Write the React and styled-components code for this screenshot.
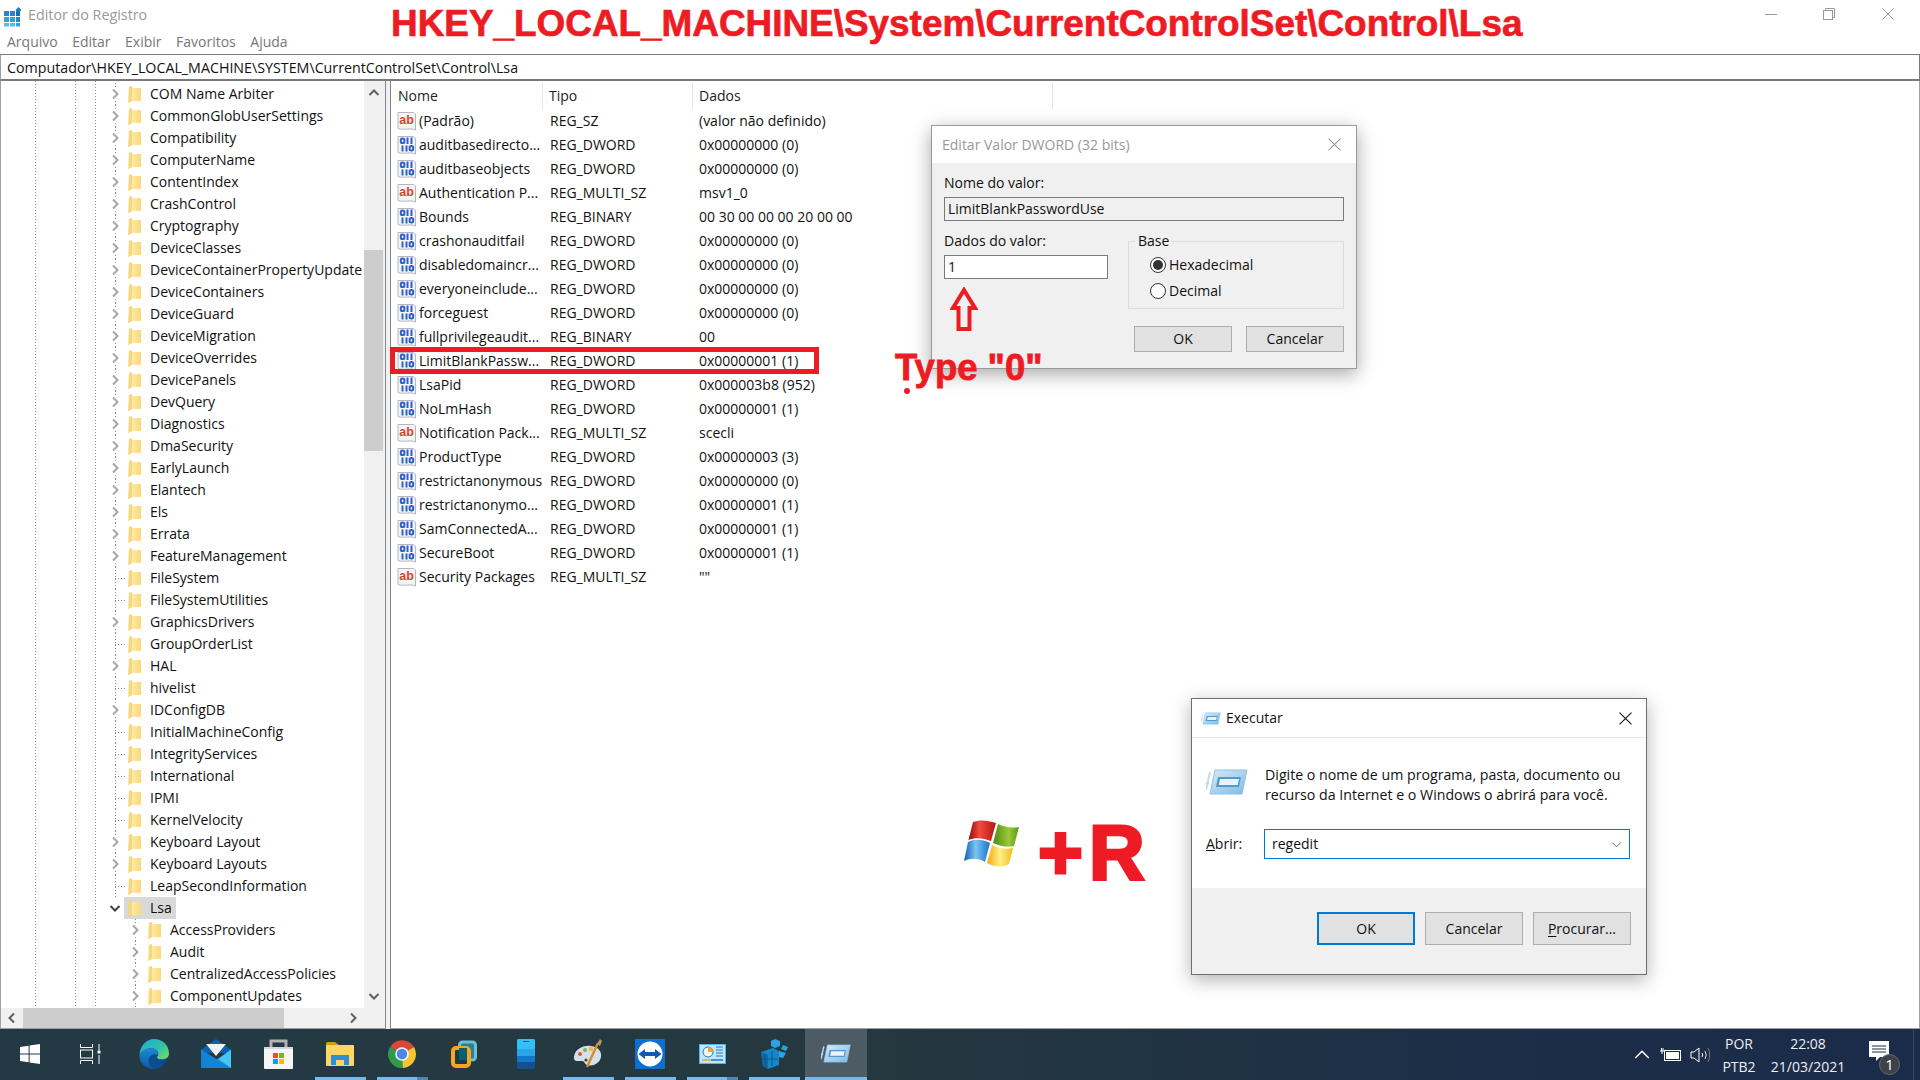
import React from 'react';
import styled, { createGlobalStyle } from 'styled-components';

const UI_FONT = '"Open Sans", "Noto Sans", "Liberation Sans", sans-serif';
const RED = '#ed1c24';

const GlobalStyle = createGlobalStyle`
  html, body { margin: 0; padding: 0; background: #fff; }
  * { box-sizing: border-box; }
  body { font: 14px/18px ${UI_FONT}; color: #111; overflow: hidden; }
`;

const treeItems = [
  ['COM Name Arbiter', 1], ['CommonGlobUserSettings', 1], ['Compatibility', 1], ['ComputerName', 1],
  ['ContentIndex', 1], ['CrashControl', 1], ['Cryptography', 1], ['DeviceClasses', 1],
  ['DeviceContainerPropertyUpdate', 1], ['DeviceContainers', 1], ['DeviceGuard', 1], ['DeviceMigration', 1],
  ['DeviceOverrides', 1], ['DevicePanels', 1], ['DevQuery', 1], ['Diagnostics', 1], ['DmaSecurity', 1],
  ['EarlyLaunch', 1], ['Elantech', 1], ['Els', 1], ['Errata', 1], ['FeatureManagement', 1],
  ['FileSystem', 0], ['FileSystemUtilities', 0], ['GraphicsDrivers', 1], ['GroupOrderList', 0], ['HAL', 1],
  ['hivelist', 0], ['IDConfigDB', 1], ['InitialMachineConfig', 0], ['IntegrityServices', 0],
  ['International', 0], ['IPMI', 0], ['KernelVelocity', 0], ['Keyboard Layout', 1], ['Keyboard Layouts', 1],
  ['LeapSecondInformation', 0],
];
const lsaChildren = ['AccessProviders', 'Audit', 'CentralizedAccessPolicies', 'ComponentUpdates'];

const values = [
  ['ab', '(Padrão)', 'REG_SZ', '(valor não definido)'],
  ['bin', 'auditbasedirecto...', 'REG_DWORD', '0x00000000 (0)'],
  ['bin', 'auditbaseobjects', 'REG_DWORD', '0x00000000 (0)'],
  ['ab', 'Authentication P...', 'REG_MULTI_SZ', 'msv1_0'],
  ['bin', 'Bounds', 'REG_BINARY', '00 30 00 00 00 20 00 00'],
  ['bin', 'crashonauditfail', 'REG_DWORD', '0x00000000 (0)'],
  ['bin', 'disabledomaincr...', 'REG_DWORD', '0x00000000 (0)'],
  ['bin', 'everyoneinclude...', 'REG_DWORD', '0x00000000 (0)'],
  ['bin', 'forceguest', 'REG_DWORD', '0x00000000 (0)'],
  ['bin', 'fullprivilegeaudit...', 'REG_BINARY', '00'],
  ['bin', 'LimitBlankPassw...', 'REG_DWORD', '0x00000001 (1)'],
  ['bin', 'LsaPid', 'REG_DWORD', '0x000003b8 (952)'],
  ['bin', 'NoLmHash', 'REG_DWORD', '0x00000001 (1)'],
  ['ab', 'Notification Pack...', 'REG_MULTI_SZ', 'scecli'],
  ['bin', 'ProductType', 'REG_DWORD', '0x00000003 (3)'],
  ['bin', 'restrictanonymous', 'REG_DWORD', '0x00000000 (0)'],
  ['bin', 'restrictanonymo...', 'REG_DWORD', '0x00000001 (1)'],
  ['bin', 'SamConnectedA...', 'REG_DWORD', '0x00000001 (1)'],
  ['bin', 'SecureBoot', 'REG_DWORD', '0x00000001 (1)'],
  ['ab', 'Security Packages', 'REG_MULTI_SZ', '""'],
];

/* ---------- page ---------- */

const Page = styled.div`
  position: relative;
  width: 1920px;
  height: 1080px;
  display: flex;
  flex-direction: column;
  overflow: hidden;
  background: #fff;
`;

const TitleBar = styled.div`
  height: 30px;
  display: flex;
  align-items: center;
  padding: 0 3px 0 2px;
  color: #999;
  font-size: 14.3px;
  svg { flex: none; }
`;

const TitleText = styled.span`
  margin-left: 6px;
`;

const WindowControls = styled.div`
  margin-left: auto;
  display: flex;
`;

const ControlButton = styled.div`
  width: 58.5px;
  height: 30px;
  display: flex;
  align-items: center;
  justify-content: center;
  padding-bottom: 2px;
`;

const MenuBar = styled.div`
  height: 24px;
  display: flex;
  align-items: center;
  padding-left: 7px;
  gap: 14.5px;
  color: #777;
  font-size: 14px;
`;

const AddressBar = styled.div`
  height: 27px;
  border: 1px solid #7a7a7a;
  border-bottom-width: 2px;
  border-left: 1px solid #a0a0a0;
  padding: 1px 0 0 6px;
  display: flex;
  align-items: center;
  font-size: 14.25px;
  white-space: nowrap;
`;

const Body = styled.div`
  flex: 1;
  min-height: 0;
  display: flex;
`;

/* ---------- tree ---------- */

const TreePane = styled.div`
  width: 386px;
  flex: none;
  display: grid;
  grid-template-columns: 1fr 21px;
  grid-template-rows: 1fr 20px;
  border-left: 1px solid #a0a0a0;
  border-right: 1px solid #828790;
  border-bottom: 1px solid #a0a0a0;
`;

const dots = (x) => `repeating-linear-gradient(#8a8a8a 0 1px, transparent 1px 3px) ${x}px 0 / 1px 100% no-repeat`;

const TreeView = styled.div`
  overflow: hidden;
  padding-top: 2px;
  background: ${dots(34)}, ${dots(74)}, ${dots(94)};
`;

const TreeRow = styled.div`
  height: 22px;
  display: flex;
  align-items: center;
  padding-left: ${(p) => (p.$depth ? 124 : 104)}px;
  white-space: nowrap;
  background: ${(p) => (p.$last ? 'none' : dots(p.$depth ? 134 : 114))};
`;

const Twisty = styled.span`
  width: 20px;
  height: 22px;
  flex: none;
  display: flex;
  align-items: center;
  justify-content: center;
  svg { background: #fff; }
`;

const LeafDash = styled.span`
  width: 10px;
  height: 1px;
  margin-left: 10px;
  flex: none;
  background: repeating-linear-gradient(90deg, #8a8a8a 0 1px, transparent 1px 3px);
`;

const TreeEntry = styled.span`
  display: flex;
  align-items: center;
  height: 22px;
  padding: 0 4px;
  margin-left: -1px;
  background: ${(p) => (p.$selected ? '#d9d9d9' : 'transparent')};
  svg { margin-right: 9px; flex: none; }
`;

const VScroll = styled.div`
  background: #f0f0f0;
  display: flex;
  flex-direction: column;
  align-items: center;
  width: 21px;
  padding-right: 2px;
`;

const ScrollArrow = styled.div`
  flex: none;
  width: 100%;
  height: ${(p) => p.$size || 24}px;
  display: flex;
  align-items: center;
  justify-content: center;
  margin-top: ${(p) => (p.$end ? 'auto' : 0)};
`;

const VThumb = styled.div`
  width: 100%;
  height: 201px;
  margin-top: 145px;
  background: #cdcdcd;
`;

const HScroll = styled.div`
  background: #f0f0f0;
  display: flex;
  align-items: stretch;
  grid-column: 1;
`;

const HThumb = styled.div`
  width: 261px;
  background: #cdcdcd;
`;

const HArrow = styled.div`
  width: 22px;
  flex: none;
  display: flex;
  align-items: center;
  justify-content: center;
  margin-left: ${(p) => (p.$end ? 'auto' : 0)};
`;

const Corner = styled.div`
  background: #f0f0f0;
`;

const Splitter = styled.div`
  width: 4px;
  flex: none;
  background: #f0f0f0;
`;

/* ---------- value list ---------- */

const ListPane = styled.div`
  flex: 1;
  border-left: 1px solid #828790;
  border-bottom: 1px solid #a0a0a0;
  border-right: 1px solid #a0a0a0;
`;

const ListHeader = styled.div`
  display: grid;
  grid-template-columns: 152px 150px 360px;
  height: 28px;
  padding-top: 2px;
  align-items: center;
`;

const HeaderCell = styled.div`
  height: 26px;
  padding-left: ${(p) => p.$pad}px;
  display: flex;
  align-items: center;
  color: #222;
  border-right: 1px solid #e5e5e5;
`;

const ListRow = styled.div`
  display: grid;
  grid-template-columns: 153px 149px 1fr;
  height: 24px;
  align-items: center;
  padding-left: 6px;
  white-space: nowrap;
`;

const NameCell = styled.div`
  display: flex;
  align-items: center;
  gap: 2px;
  overflow: hidden;
`;

/* ---------- dialogs ---------- */

const DwordWindow = styled.div`
  position: absolute;
  left: 931px;
  top: 125px;
  width: 426px;
  height: 244px;
  border: 1px solid #9a9a9a;
  background: #f0f0f0;
  box-shadow: 0 5px 18px rgba(0, 0, 0, 0.35);
`;

const DialogTitle = styled.div`
  height: 37px;
  background: #fff;
  display: flex;
  align-items: center;
  justify-content: space-between;
  padding: 0 15px 0 10px;
  color: ${(p) => (p.$active ? '#111' : '#999')};
`;

const DwordBody = styled.div`
  padding: 11px 12px 0 12px;
`;

const FieldLabel = styled.div`
  height: 18px;
  margin-bottom: 5px;
  line-height: 18px;
`;

const TextField = styled.div`
  height: 24px;
  border: 1px solid #7a7a7a;
  background: ${(p) => (p.$readOnly ? '#f0f0f0' : '#fff')};
  display: flex;
  align-items: center;
  padding-left: 3px;
`;

const DwordColumns = styled.div`
  display: grid;
  grid-template-columns: 164px 216px;
  column-gap: 20px;
  margin-top: 11px;
`;

const BaseGroup = styled.fieldset`
  margin: 0;
  height: 77px;
  padding: 2px 0 0 21px;
  border: 1px solid #dcdcdc;
  legend {
    margin-left: -15px;
    padding: 0 3px;
    line-height: 18px;
  }
`;

const RadioRow = styled.div`
  height: 26px;
  display: flex;
  align-items: center;
  gap: 3px;
`;

const RadioDot = styled.span`
  width: 16px;
  height: 16px;
  border-radius: 50%;
  border: 1px solid #333;
  background: #fff;
  display: flex;
  align-items: center;
  justify-content: center;
  &::after {
    content: '';
    width: 10px;
    height: 10px;
    border-radius: 50%;
    background: ${(p) => (p.$on ? '#333' : 'transparent')};
  }
`;

const ButtonRow = styled.div`
  display: flex;
  justify-content: flex-end;
  gap: ${(p) => p.$gap}px;
  margin-top: ${(p) => p.$top || 0}px;
  padding-right: ${(p) => p.$right || 0}px;
`;

const DialogButton = styled.div`
  width: 98px;
  height: ${(p) => p.$h}px;
  background: #e1e1e1;
  border: ${(p) => (p.$focus ? '2px solid #0078d7' : '1px solid #adadad')};
  display: flex;
  align-items: center;
  justify-content: center;
  u { text-decoration-thickness: 1px; text-underline-offset: 2px; }
`;

const RunWindow = styled.div`
  position: absolute;
  left: 1191px;
  top: 698px;
  width: 456px;
  height: 277px;
  border: 1px solid #6f6f6f;
  background: #fff;
  display: flex;
  flex-direction: column;
  box-shadow: 0 5px 18px rgba(0, 0, 0, 0.3);
`;

const RunTitle = styled.div`
  height: 39px;
  flex: none;
  border-bottom: 1px solid #e8e8e8;
  display: flex;
  align-items: center;
  padding: 0 14px 0 9px;
  gap: 5px;
  svg:last-child { margin-left: auto; }
`;

const RunBody = styled.div`
  flex: none;
  height: 150px;
  padding: 27px 16px 0 14px;
`;

const RunMessage = styled.div`
  display: flex;
  gap: 17px;
  font-size: 14.2px;
  line-height: 20px;
  white-space: nowrap;
  svg { flex: none; margin-top: 4px; }
`;

const RunForm = styled.div`
  display: flex;
  align-items: center;
  justify-content: space-between;
  margin-top: 24px;
`;

const ComboBox = styled.div`
  width: 366px;
  height: 30px;
  border: 1px solid #0078d7;
  display: flex;
  align-items: center;
  justify-content: space-between;
  padding: 0 7px 0 7px;
`;

const RunFooter = styled.div`
  flex: 1;
  background: #f0f0f0;
  padding-top: 24px;
`;

/* ---------- annotations ---------- */

const BigTitle = styled.div`
  position: absolute;
  left: 391px;
  top: 2px;
  font: 700 36.9px/44px "Liberation Sans", Arial, sans-serif;
  -webkit-text-stroke: 0.7px ${RED};
  color: ${RED};
  white-space: nowrap;
`;

const RedFrame = styled.div`
  position: absolute;
  left: 390px;
  top: 347px;
  width: 429px;
  height: 27px;
  border: 5px solid ${RED};
`;

const TypeNote = styled.div`
  position: absolute;
  left: 895px;
  top: 346px;
  font: 700 36.5px/44px "Liberation Sans", Arial, sans-serif;
  -webkit-text-stroke: 0.8px ${RED};
  color: ${RED};
  white-space: nowrap;
`;

const RedDot = styled.div`
  position: absolute;
  left: 904px;
  top: 388px;
  width: 6px;
  height: 6px;
  border-radius: 50%;
  background: ${RED};
`;

const ArrowNote = styled.svg`
  position: absolute;
  left: 950px;
  top: 287px;
`;

const LogoNote = styled.svg`
  position: absolute;
  left: 964px;
  top: 820px;
`;

const PlusR = styled.div`
  position: absolute;
  left: 1038px;
  top: 808px;
  font: 700 77px/88px "Liberation Sans", Arial, sans-serif;
  -webkit-text-stroke: 3px ${RED};
  letter-spacing: 6px;
  color: ${RED};
  white-space: nowrap;
`;

/* ---------- taskbar ---------- */

const Taskbar = styled.div`
  height: 51px;
  flex: none;
  display: flex;
  align-items: stretch;
  color: #eee;
  background: linear-gradient(90deg, #233a45 0%, #25383f 45%, #1b2d49 82%, #1b2c4a 100%);
`;

const TaskButton = styled.div`
  position: relative;
  width: ${(p) => p.$w || 62}px;
  margin-right: ${(p) => p.$mr || 0}px;
  flex: none;
  display: flex;
  align-items: center;
  justify-content: center;
  padding-bottom: 2px;
  background: ${(p) => (p.$active ? '#4d5c64' : 'transparent')};
`;

const RunningTick = styled.span`
  position: absolute;
  bottom: 0;
  left: ${(p) => (p.$full ? 0 : 6)}px;
  right: ${(p) => (p.$full ? 0 : 5)}px;
  height: 3px;
  background: ${(p) =>
    p.$stacked ? 'linear-gradient(90deg, #76b9ed 0 40px, #4f86b0 40px)' : '#76b9ed'};
`;

const Tray = styled.div`
  margin-left: auto;
  display: flex;
  align-items: center;
  font-size: 14px;
`;

const TrayIcon = styled.div`
  width: ${(p) => p.$w}px;
  display: flex;
  align-items: center;
  justify-content: center;
`;

const TrayStack = styled.div`
  width: ${(p) => p.$w}px;
  display: flex;
  flex-direction: column;
  align-items: center;
  line-height: 23px;
  white-space: nowrap;
`;

const NotifyButton = styled.div`
  position: relative;
  width: 62px;
  height: 100%;
  display: flex;
  align-items: center;
  padding: 0 0 8px 17px;
  border-right: 1px solid #3c4a5e;
`;

const NotifyBadge = styled.span`
  position: absolute;
  left: 27px;
  top: 25px;
  width: 21px;
  height: 21px;
  border-radius: 50%;
  background: #3d4249;
  border: 1px solid #666b72;
  color: #fff;
  font-size: 15px;
  line-height: 19px;
  text-align: center;
`;

const DesktopPeek = styled.div`
  width: 6px;
`;

/* ---------- small drawings ---------- */

const Chevron = ({ dir = 'right', color = '#a6a6a6', size = 12, w = 2 }) => {
  const pts = {
    right: '4,1.5 8.5,6 4,10.5',
    left: '8,1.5 3.5,6 8,10.5',
    up: '1.5,8 6,3.5 10.5,8',
    down: '1.5,4 6,8.5 10.5,4',
  }[dir];
  return (
    <svg width={size} height={size} viewBox="0 0 12 12">
      <polyline points={pts} fill="none" stroke={color} strokeWidth={w} />
    </svg>
  );
};

const Cross = ({ size = 12, color = '#999' }) => (
  <svg width={size} height={size} viewBox="0 0 12 12">
    <path d="M0.5 0.5 L11.5 11.5 M11.5 0.5 L0.5 11.5" stroke={color} strokeWidth="1" fill="none" />
  </svg>
);

const FolderIcon = () => (
  <svg width="13" height="17" viewBox="0 0 13 17">
    <defs>
      <linearGradient id="fold" x1="0" x2="1" y1="0" y2="0">
        <stop offset="0" stopColor="#f3c75d" />
        <stop offset="0.3" stopColor="#ffeaa6" />
        <stop offset="1" stopColor="#fcd877" />
      </linearGradient>
    </defs>
    <path d="M1 1 L4 0 V2 H13 V15 H4 L0.5 17 Z" fill="url(#fold)" />
    <path d="M1 1 L4 0 V15 L0.5 17 Z" fill="#f8d67c" />
  </svg>
);

const Sheet = ({ children }) => (
  <svg width="20" height="20" viewBox="0 0 20 20" style={{ flex: 'none' }}>
    <path d="M1 1.5 H16.5 L18.5 3 V19 C13 16.5 7 19.5 1 17.5 Z" fill="#f6f6f6" stroke="#b4b6c0" />
    {children}
  </svg>
);

const AbIcon = () => (
  <Sheet>
    <text x="2.2" y="12.5" fontFamily="Liberation Sans, sans-serif" fontWeight="700" fontSize="12.5" fill="#d8452c">
      ab
    </text>
  </Sheet>
);

const BinIcon = () => (
  <Sheet>
    <g fill="none" stroke="#2a5fd0" strokeWidth="2">
      <rect x="3.8" y="3.5" width="3.6" height="4.6" rx="1.6" />
      <path d="M10.5 2.5 V9 M14.5 2.5 V9" />
      <path d="M5.5 10.5 V16.5 M9.5 10.5 V16.5" />
      <rect x="12.6" y="11" width="3.6" height="4.4" rx="1.6" />
    </g>
  </Sheet>
);

const RegeditSmall = () => (
  <svg width="20" height="24" viewBox="0 0 20 24">
    <g fill="#1c8ad0">
      <rect x="2" y="8" width="5" height="5" />
      <rect x="8" y="8" width="5" height="5" />
      <rect x="14" y="8" width="4" height="5" fill="#136fb5" />
      <rect x="2" y="14" width="5" height="5" fill="#2ea3e0" />
      <rect x="8" y="14" width="5" height="5" fill="#2ea3e0" />
      <rect x="14" y="14" width="4" height="5" />
      <rect x="2" y="20" width="5" height="3.5" fill="#54bdeb" />
      <rect x="8" y="20" width="5" height="3.5" fill="#54bdeb" />
      <rect x="14" y="20" width="4" height="3.5" fill="#2ea3e0" />
      <path d="M16.5 4 L19.5 7 L16.5 10 L13.5 7 Z" fill="#1c7fc4" />
    </g>
  </svg>
);

const RunGlyph = ({ w = 42, h = 26 }) => (
  <svg width={w} height={h} viewBox="0 0 42 26">
    <defs>
      <linearGradient id="runG" x1="0" x2="1" y1="0" y2="1">
        <stop offset="0" stopColor="#d6ecfa" />
        <stop offset="1" stopColor="#7fb9e3" />
      </linearGradient>
    </defs>
    <path d="M0 21 L4 3 M-0 14 L3 14" stroke="#bcdcf2" strokeWidth="2" fill="none" />
    <path d="M9 1 H41 L36 25 H4 Z" fill="url(#runG)" stroke="#8fc1e6" />
    <path d="M12 8 H35 L33 18 H10 Z" fill="#4e9ad2" />
    <path d="M14 10 H33 L31.8 16 H12.8 Z" fill="#e8f3fb" />
  </svg>
);

const WinXpLogo = () => (
  <LogoNote width="55" height="48" viewBox="0 0 55 48">
    <defs>
      <linearGradient id="xpR" x1="0" x2="1" y1="0" y2="0">
        <stop offset="0" stopColor="#8d0d0d" />
        <stop offset="0.4" stopColor="#f04b3b" />
        <stop offset="1" stopColor="#b81414" />
      </linearGradient>
      <linearGradient id="xpG" x1="0" x2="1" y1="0" y2="0">
        <stop offset="0" stopColor="#4f8a12" />
        <stop offset="0.6" stopColor="#9ac93a" />
        <stop offset="1" stopColor="#5c9a16" />
      </linearGradient>
      <linearGradient id="xpB" x1="0" x2="1" y1="0" y2="0">
        <stop offset="0" stopColor="#0f5fb5" />
        <stop offset="0.45" stopColor="#7cc4f2" />
        <stop offset="1" stopColor="#1a73c8" />
      </linearGradient>
      <linearGradient id="xpY" x1="0" x2="1" y1="0" y2="0">
        <stop offset="0" stopColor="#f2a90c" />
        <stop offset="0.5" stopColor="#fff08a" />
        <stop offset="1" stopColor="#f5b818" />
      </linearGradient>
    </defs>
    <path d="M9 2 C15 -0.5 23 0 32 3 L27 21 C20 18 11 17 4.5 20 Z" fill="url(#xpR)" />
    <path d="M34 4 C40 7 48 8.5 55 7 L50 26 C44 28 36 26 29 23 Z" fill="url(#xpG)" />
    <path d="M4 22 C10 19 18 19 26 23 L21 42 C14 38 7 38 0 41 Z" fill="url(#xpB)" />
    <path d="M28 25 C34 28 42 30 49 28 L45 44 C38 48 30 47 23 43 Z" fill="url(#xpY)" />
  </LogoNote>
);

/* taskbar glyphs */
const StartIcon = () => (
  <svg width="20" height="20" viewBox="0 0 20 20">
    <path d="M0 3 L8.6 1.7 V9.4 H0 Z M9.6 1.5 L20 0 V9.4 H9.6 Z M0 10.4 H8.6 V18.2 L0 17 Z M9.6 10.4 H20 V20 L9.6 18.4 Z" fill="#fff" />
  </svg>
);

const TaskViewIcon = () => (
  <svg width="21" height="20" viewBox="0 0 21 20">
    <path d="M0.5 0 V3.5 H12.5 V0 M0.5 20 V16.5 H12.5 V20" fill="none" stroke="#fff" />
    <rect x="0.5" y="6" width="12" height="8" fill="none" stroke="#fff" />
    <path d="M19 0 V6 M19 11 V20" stroke="#fff" />
    <rect x="17.5" y="6.5" width="3" height="3" fill="#fff" />
  </svg>
);

const EdgeIcon = () => (
  <svg width="30" height="30" viewBox="0 0 30 30">
    <defs>
      <linearGradient id="edgeA" x1="0" x2="1" y1="0" y2="1">
        <stop offset="0" stopColor="#1fa7dc" />
        <stop offset="0.55" stopColor="#2fc2a7" />
        <stop offset="1" stopColor="#7fdc5a" />
      </linearGradient>
      <linearGradient id="edgeB" x1="0" x2="0" y1="0" y2="1">
        <stop offset="0" stopColor="#1c8ad6" />
        <stop offset="1" stopColor="#0c59a4" />
      </linearGradient>
    </defs>
    <path d="M15 0 C24 0 30 6.5 30 14.5 C30 19 26 20.5 22 20.5 C18 20.5 17 19 18 18 C20 16 20 12 16 10 C10 7.5 3 11 0.5 16 C1 7 7 0 15 0 Z" fill="url(#edgeA)" />
    <path d="M0.5 16 C3 11 10 7.5 16 10 C19 11.5 19.5 14 18.5 16 C13 14 9.5 18 10 22 C10.5 26 13 29 17 30 C8 31 0 25 0.5 16 Z" fill="url(#edgeB)" />
    <path d="M10 22 C9.5 18 13 14 18 16 C17 18 18 20.5 22 20.5 C25 20.5 27 20 28.5 19 C26.5 25 22 29 17 30 C13 29 10.5 26 10 22 Z" fill="#0b4c93" />
  </svg>
);

const MailIcon = () => (
  <svg width="30" height="29" viewBox="0 0 30 29">
    <path d="M0 11 L15 0 L30 11 V14 H0 Z" fill="#0a62b3" />
    <path d="M5 5 H25 L15 17 Z" fill="#f2f2f2" />
    <path d="M0 10.5 L15 21 L30 10.5 V29 H0 Z" fill="#2aa4e8" />
    <path d="M0 10.5 L30 29 H0 Z" fill="#1284d6" />
    <path d="M30 10.5 V29 L18 20 Z" fill="#47c3f5" />
  </svg>
);

const StoreIcon = () => (
  <svg width="29" height="30" viewBox="0 0 29 30">
    <path d="M7 9 V2 H22 V9" fill="none" stroke="#b3b3b3" strokeWidth="3" />
    <rect y="8" width="29" height="22" fill="#f5f5f5" rx="1" />
    <rect y="8" width="29" height="2" fill="#d6d6d6" />
    <rect x="9" y="14" width="5" height="5" fill="#ea4f25" />
    <rect x="15" y="14" width="5" height="5" fill="#80b800" />
    <rect x="9" y="20" width="5" height="5" fill="#00a3ee" />
    <rect x="15" y="20" width="5" height="5" fill="#ffba00" />
  </svg>
);

const ExplorerIcon = () => (
  <svg width="28" height="24" viewBox="0 0 28 24">
    <path d="M0 2 Q0 0 2 0 H9 L13 3 V6 H0 Z" fill="#d69d12" />
    <rect y="3" width="28" height="21" rx="1" fill="#ffd565" />
    <path d="M5 23 V13 H23 V23 H18 V18 H10 V23 Z" fill="#2e8ed8" />
  </svg>
);

const ChromeIcon = () => (
  <svg width="28" height="28" viewBox="0 0 28 28">
    <path d="M14 14 L2 7 A14 14 0 0 1 26 7 Z" fill="#d9473a" />
    <path d="M14 14 H28 A14 14 0 0 1 14 28 L14 14 Z" fill="#f6c531" />
    <path d="M26 7 A14 14 0 0 1 28 14 H14 Z" fill="#f6c531" />
    <path d="M2 7 L14 14 L15 28 A14 14 0 0 1 2 7 Z" fill="#2f9a4c" />
    <circle cx="14" cy="14" r="6.8" fill="#eef3fb" />
    <circle cx="14" cy="14" r="5.2" fill="#4a86e8" />
  </svg>
);

const VmwareIcon = () => (
  <svg width="26" height="28" viewBox="0 0 26 28">
    <rect x="8.5" y="2" width="16" height="18" rx="3" fill="#2b7f96" stroke="#6cc0cf" strokeWidth="3" />
    <rect x="2" y="8" width="16" height="18" rx="3" fill="#1e3a44" stroke="#f5a623" strokeWidth="4" />
    <rect x="8" y="8" width="8" height="12" fill="#0c6072" />
  </svg>
);

const PhoneIcon = () => (
  <svg width="18" height="30" viewBox="0 0 18 30">
    <rect width="18" height="30" rx="1.5" fill="#14508f" />
    <path d="M0 1.5 Q0 0 1.5 0 H16.5 Q18 0 18 1.5 V10 H0 Z" fill="#33c0f4" />
    <rect y="10" width="18" height="7" fill="#2aa4e8" />
    <rect y="17" width="18" height="6" fill="#0f78c8" />
    <rect x="6" y="2" width="6" height="1" fill="#0e5f9e" />
  </svg>
);

const PaintIcon = () => (
  <svg width="30" height="30" viewBox="0 0 30 30">
    <path d="M1 18 C2 10 10 6 18 7 C25 8 29 12 28 18 C27 24 20 28 14 26 C11 25 12 22 9 22 C5 22 0.5 23 1 18 Z" fill="#d5e0e8" />
    <circle cx="7" cy="15" r="2" fill="#d85a4e" />
    <circle cx="12" cy="11" r="2" fill="#7cb84c" />
    <circle cx="18" cy="10" r="2.2" fill="#eebd3b" />
    <circle cx="13" cy="21" r="1.6" fill="#444" />
    <path d="M14 28 L25 4" stroke="#d98a2b" strokeWidth="2.4" />
    <path d="M24 5 L27 0 L29 2 L27 7 Z" fill="#b59466" />
  </svg>
);

const TeamViewerIcon = () => (
  <svg width="30" height="30" viewBox="0 0 30 30">
    <rect width="30" height="30" rx="1" fill="#0e6fd0" />
    <circle cx="15" cy="15" r="12.5" fill="#fff" />
    <path d="M3.5 15 L10 10 V13 H20 V10 L26.5 15 L20 20 V17 H10 V20 Z" fill="#0e5cb0" />
  </svg>
);

const PanelIcon = () => (
  <svg width="27" height="20" viewBox="0 0 27 20">
    <rect width="27" height="20" fill="#4fb6ea" />
    <rect x="1" y="1" width="25" height="18" fill="#bfe6f9" />
    <circle cx="9" cy="8" r="5" fill="#f3f7fa" stroke="#2677bb" />
    <path d="M9 8 V3 A5 5 0 0 1 14 8 Z" fill="#eda92f" />
    <path d="M17 3 H24 M17 6 H24 M17 9 H24 M17 12 H24" stroke="#2677bb" />
    <path d="M3 16 H12" stroke="#eda92f" strokeWidth="1.5" />
    <path d="M12 16 H24" stroke="#2677bb" strokeWidth="1.5" />
  </svg>
);

const RegCubesIcon = () => (
  <svg width="27" height="30" viewBox="0 0 27 30">
    <g fill="#1586c9">
      <path d="M14 0 L19 2 V7 L14 9 L10 7 V2 Z" fill="#2aa4e0" />
      <path d="M22 6 L27 8 L25 12 L20 10 Z" fill="#2aa4e0" />
      <path d="M0 13 L12 9 L18 12 V26 L7 30 L2 27 Z" />
      <path d="M2 27 L7 30 V16 L0 13 Z" fill="#0f6aa8" />
      <path d="M18 12 L25 14 L22 19 L18 18 Z" fill="#2aa4e0" />
      <path d="M4 15 V27 M11 12 V27 M1 20 H17" stroke="#0a4f80" strokeWidth="0.8" />
    </g>
  </svg>
);

const BatteryIcon = () => (
  <svg width="21" height="13" viewBox="0 0 21 13">
    <path d="M0 3 H4 M1.5 0 V3 M3 0 V3 M2 3 V6" stroke="#fff" fill="none" />
    <rect x="4.5" y="2.5" width="16" height="10" fill="none" stroke="#fff" />
    <rect x="6" y="4" width="13" height="7" fill="#fff" />
  </svg>
);

const VolumeIcon = () => (
  <svg width="21" height="18" viewBox="0 0 21 18">
    <path d="M1 6 H4 L9 2 V16 L4 12 H1 Z" fill="none" stroke="#fff" />
    <path d="M12 7 Q13.5 9 12 11" fill="none" stroke="#fff" />
    <path d="M15 5 Q17.5 9 15 13" fill="none" stroke="#ddd" />
    <path d="M18 2 Q21.5 9 18 16" fill="none" stroke="#777" />
  </svg>
);

const BubbleIcon = () => (
  <svg width="20" height="20" viewBox="0 0 20 20">
    <path d="M0 0 H20 V16 H11 L7 20 V16 H0 Z" fill="#fff" />
    <path d="M3 5 H17 M3 8 H17 M3 11 H17" stroke="#1b2c4a" />
  </svg>
);

const taskIcons = [
  { id: 'edge', Icon: EdgeIcon },
  { id: 'mail', Icon: MailIcon },
  { id: 'store', Icon: StoreIcon },
  { id: 'explorer', Icon: ExplorerIcon, tick: 'one' },
  { id: 'chrome', Icon: ChromeIcon, tick: 'stacked' },
  { id: 'vmware', Icon: VmwareIcon },
  { id: 'phone', Icon: PhoneIcon },
  { id: 'paint', Icon: PaintIcon, tick: 'one' },
  { id: 'teamviewer', Icon: TeamViewerIcon, tick: 'one' },
  { id: 'panel', Icon: PanelIcon, tick: 'stacked' },
  { id: 'regedit', Icon: RegCubesIcon, tick: 'one' },
];

function RegistryTree() {
  return (
    <TreeView>
      {treeItems.map(([name, expandable]) => (
        <TreeRow key={name}>
          <Twisty>{expandable ? <Chevron /> : <LeafDash />}</Twisty>
          <TreeEntry>
            <FolderIcon />
            {name}
          </TreeEntry>
        </TreeRow>
      ))}
      <TreeRow $last>
        <Twisty>
          <Chevron dir="down" color="#404040" />
        </Twisty>
        <TreeEntry $selected>
          <FolderIcon />
          Lsa
        </TreeEntry>
      </TreeRow>
      {lsaChildren.map((name) => (
        <TreeRow key={name} $depth={1}>
          <Twisty>
            <Chevron />
          </Twisty>
          <TreeEntry>
            <FolderIcon />
            {name}
          </TreeEntry>
        </TreeRow>
      ))}
    </TreeView>
  );
}

function ValueList() {
  return (
    <ListPane>
      <ListHeader>
        <HeaderCell $pad={7}>Nome</HeaderCell>
        <HeaderCell $pad={6}>Tipo</HeaderCell>
        <HeaderCell $pad={6}>Dados</HeaderCell>
      </ListHeader>
      {values.map(([kind, name, type, data]) => (
        <ListRow key={name}>
          <NameCell>
            {kind === 'ab' ? <AbIcon /> : <BinIcon />}
            {name}
          </NameCell>
          <div>{type}</div>
          <div>{data}</div>
        </ListRow>
      ))}
    </ListPane>
  );
}

function DwordDialog() {
  return (
    <DwordWindow>
      <DialogTitle>
        Editar Valor DWORD (32 bits)
        <Cross size={13} />
      </DialogTitle>
      <DwordBody>
        <FieldLabel>Nome do valor:</FieldLabel>
        <TextField $readOnly>LimitBlankPasswordUse</TextField>
        <DwordColumns>
          <div>
            <FieldLabel>Dados do valor:</FieldLabel>
            <TextField>1</TextField>
          </div>
          <BaseGroup>
            <legend>Base</legend>
            <RadioRow>
              <RadioDot $on />
              Hexadecimal
            </RadioRow>
            <RadioRow>
              <RadioDot />
              Decimal
            </RadioRow>
          </BaseGroup>
        </DwordColumns>
        <ButtonRow $gap={14} $top={17}>
          <DialogButton $h={26}>OK</DialogButton>
          <DialogButton $h={26}>Cancelar</DialogButton>
        </ButtonRow>
      </DwordBody>
    </DwordWindow>
  );
}

function RunDialog() {
  return (
    <RunWindow>
      <RunTitle>
        <RunGlyph w={20} h={13} />
        Executar
        <Cross size={13} color="#111" />
      </RunTitle>
      <RunBody>
        <RunMessage>
          <RunGlyph />
          <span>
            Digite o nome de um programa, pasta, documento ou
            <br />
            recurso da Internet e o Windows o abrirá para você.
          </span>
        </RunMessage>
        <RunForm>
          <span>
            <u>A</u>brir:
          </span>
          <ComboBox>
            regedit
            <Chevron dir="down" color="#555" size={11} w={1} />
          </ComboBox>
        </RunForm>
      </RunBody>
      <RunFooter>
        <ButtonRow $gap={10} $right={15}>
          <DialogButton $h={33} $focus>OK</DialogButton>
          <DialogButton $h={33}>Cancelar</DialogButton>
          <DialogButton $h={33}>
            <span>
              <u>P</u>rocurar...
            </span>
          </DialogButton>
        </ButtonRow>
      </RunFooter>
    </RunWindow>
  );
}

function TaskbarStrip() {
  return (
    <Taskbar>
      <TaskButton $w={60}><StartIcon /></TaskButton>
      <TaskButton $w={60} $mr={3}><TaskViewIcon /></TaskButton>
      {taskIcons.map(({ id, Icon, tick }) => (
        <TaskButton key={id}>
          <Icon />
          {tick && <RunningTick $stacked={tick === 'stacked'} />}
        </TaskButton>
      ))}
      <TaskButton $active>
        <RunGlyph w={30} h={19} />
        <RunningTick $full />
      </TaskButton>
      <Tray>
        <TrayIcon $w={26}><Chevron dir="up" color="#fff" size={18} w={1} /></TrayIcon>
        <TrayIcon $w={31}><BatteryIcon /></TrayIcon>
        <TrayIcon $w={28}><VolumeIcon /></TrayIcon>
        <TrayStack $w={50}>
          <span>POR</span>
          <span>PTB2</span>
        </TrayStack>
        <TrayStack $w={88}>
          <span>22:08</span>
          <span>21/03/2021</span>
        </TrayStack>
        <NotifyButton>
          <BubbleIcon />
          <NotifyBadge>1</NotifyBadge>
        </NotifyButton>
        <DesktopPeek />
      </Tray>
    </Taskbar>
  );
}

export default function App() {
  return (
    <Page>
      <GlobalStyle />
      <TitleBar>
        <RegeditSmall />
        <TitleText>Editor do Registro</TitleText>
        <WindowControls>
          <ControlButton>
            <svg width="12" height="12" viewBox="0 0 12 12"><path d="M0 6.5 H12" stroke="#999" /></svg>
          </ControlButton>
          <ControlButton>
            <svg width="12" height="12" viewBox="0 0 12 12" fill="none" stroke="#999">
              <rect x="0.5" y="2.5" width="9" height="9" />
              <path d="M2.5 2.5 V0.5 H11.5 V9.5 H9.5" />
            </svg>
          </ControlButton>
          <ControlButton><Cross /></ControlButton>
        </WindowControls>
      </TitleBar>
      <MenuBar>
        <span>Arquivo</span>
        <span>Editar</span>
        <span>Exibir</span>
        <span>Favoritos</span>
        <span>Ajuda</span>
      </MenuBar>
      <AddressBar>Computador\HKEY_LOCAL_MACHINE\SYSTEM\CurrentControlSet\Control\Lsa</AddressBar>
      <Body>
        <TreePane>
          <RegistryTree />
          <VScroll>
            <ScrollArrow><Chevron dir="up" color="#606060" /></ScrollArrow>
            <VThumb />
            <ScrollArrow $end><Chevron dir="down" color="#606060" /></ScrollArrow>
          </VScroll>
          <HScroll>
            <HArrow><Chevron dir="left" color="#606060" /></HArrow>
            <HThumb />
            <HArrow $end><Chevron color="#606060" /></HArrow>
          </HScroll>
          <Corner />
        </TreePane>
        <Splitter />
        <ValueList />
      </Body>
      <TaskbarStrip />

      <DwordDialog />
      <RunDialog />

      <BigTitle>HKEY_LOCAL_MACHINE\System\CurrentControlSet\Control\Lsa</BigTitle>
      <RedFrame />
      <ArrowNote width="28" height="44" viewBox="0 0 28 44">
        <path d="M14 3 L25 21 H19.5 V42 H8.5 V21 H3 Z" fill="none" stroke={RED} strokeWidth="4" />
      </ArrowNote>
      <TypeNote>Type "0"</TypeNote>
      <RedDot />
      <WinXpLogo />
      <PlusR>+R</PlusR>
    </Page>
  );
}
